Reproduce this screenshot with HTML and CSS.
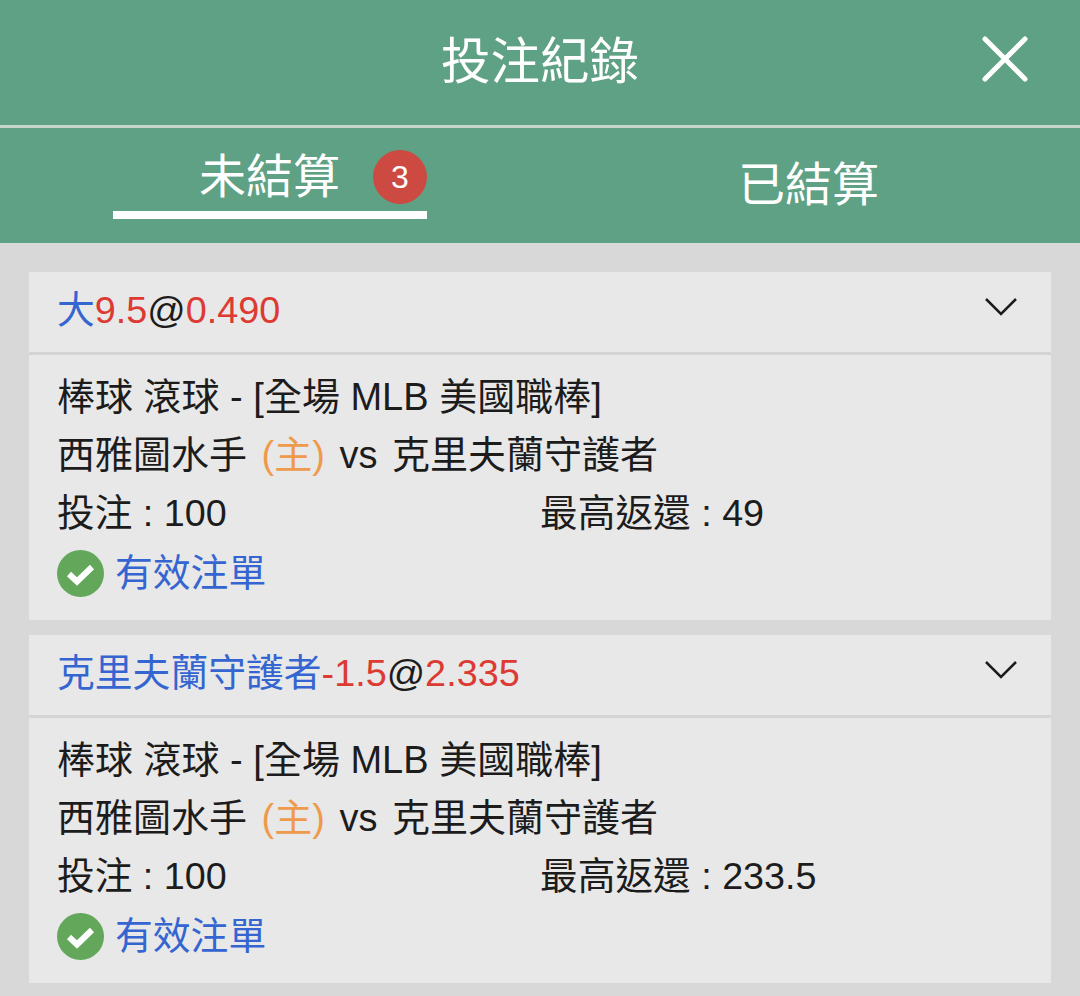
FILE: index.html
```html
<!DOCTYPE html>
<html lang="zh-Hant">
<head>
  <meta charset="UTF-8" />
  <meta name="viewport" content="width=device-width, initial-scale=1.0"/>
  <title>投注紀錄</title>
  <link rel="stylesheet" href="styles.css">
</head>
<body>
  <header class="top-bar">
    <h1>投注紀錄</h1>
    <svg class="close-icon" viewBox="0 0 46 46" width="46" height="46">
      <path d="M3 3 L43 43 M43 3 L3 43" />
    </svg>
  </header>

  <nav class="tabs">
    <div class="tab tab-active">
      <span>未結算</span>
      <span class="badge">3</span>
    </div>
    <div class="tab tab-done">已結算</div>
  </nav>

  <main class="list">
    <section class="card">
      <div class="card-head">
        <div class="pick"><span class="blue">大</span><span class="red">9.5</span>@<span class="red">0.490</span></div>
        <svg class="chevron" viewBox="0 0 32 18" width="32" height="18"><path d="M1 1 L16 16 L31 1" /></svg>
      </div>
      <div class="card-body">
        <div class="row">棒球 滾球 - [全場 MLB 美國職棒]</div>
        <div class="row row-teams">西雅圖水手 <span class="orange">(主)</span> vs 克里夫蘭守護者</div>
        <div class="row row-split">
          <span class="stake">投注 : 100</span>
          <span>最高返還 : 49</span>
        </div>
        <div class="row status">
          <svg class="check" viewBox="0 0 47 47" width="47" height="47">
            <circle cx="23.5" cy="23.5" r="23.5" />
            <path d="M12 24 L20 31.5 L35 17" />
          </svg>
          <span class="blue">有效注單</span>
        </div>
      </div>
    </section>

    <section class="card">
      <div class="card-head">
        <div class="pick"><span class="blue">克里夫蘭守護者</span><span class="red">-1.5</span>@<span class="red">2.335</span></div>
        <svg class="chevron" viewBox="0 0 32 18" width="32" height="18"><path d="M1 1 L16 16 L31 1" /></svg>
      </div>
      <div class="card-body">
        <div class="row">棒球 滾球 - [全場 MLB 美國職棒]</div>
        <div class="row row-teams">西雅圖水手 <span class="orange">(主)</span> vs 克里夫蘭守護者</div>
        <div class="row row-split">
          <span class="stake">投注 : 100</span>
          <span>最高返還 : 233.5</span>
        </div>
        <div class="row status">
          <svg class="check" viewBox="0 0 47 47" width="47" height="47">
            <circle cx="23.5" cy="23.5" r="23.5" />
            <path d="M12 24 L20 31.5 L35 17" />
          </svg>
          <span class="blue">有效注單</span>
        </div>
      </div>
    </section>
  </main>
</body>
</html>
```

FILE: styles.css
```css
:root {
  --green: #5ea184;
  --page-bg: #d8d8d8;
  --card-bg: #e8e8e8;
  --blue: #3565d0;
  --red: #dc3a33;
  --orange: #ee9a4d;
  --text: #1c1c1c;
}

html, body {
  margin: 0;
  height: 996px;
  overflow: hidden;
}

body {
  background: var(--page-bg);
  color: var(--text);
  font-family: "Liberation Sans", "Noto Sans CJK TC", sans-serif;
  font-size: 38px;
}

.top-bar {
  height: 125px;
  background: var(--green);
  border-bottom: 3px solid #c5d6cd;
  display: flex;
  align-items: center;
  justify-content: center;
  position: relative;
}

.top-bar h1 {
  margin: 0 0 2px;
  color: #fff;
  font-size: 49.5px;
  font-weight: 400;
  line-height: 1;
}

.close-icon {
  position: absolute;
  right: 52px;
  top: 36px;
}

.close-icon path {
  stroke: #fff;
  stroke-width: 5;
  stroke-linecap: round;
  fill: none;
}

.tabs {
  height: 115px;
  background: var(--green);
  color: #fff;
  font-size: 47px;
  line-height: 1;
  display: flex;
}

.tab {
  box-sizing: border-box;
  white-space: nowrap;
}

.tab-active {
  width: 314px;
  height: 91px;
  margin-left: 113px;
  padding: 25px 0 0 86px;
  border-bottom: 8px solid #fff;
  display: flex;
  gap: 33px;
}

.badge {
  flex: none;
  width: 54px;
  height: 54px;
  margin-top: -3px;
  border-radius: 50%;
  background: #cd4a43;
  font-size: 32px;
  line-height: 54px;
  text-align: center;
}

.tab-done {
  margin-left: 311px;
  padding-top: 33px;
}

.list {
  padding: 29px 29px 0;
  display: flex;
  flex-direction: column;
  gap: 15px;
}

.card {
  background: var(--card-bg);
}

.card-head {
  height: 80px;
  padding: 0 34px 0 28px;
  border-bottom: 3px solid #d4d4d4;
  display: flex;
  align-items: center;
  justify-content: space-between;
}

.pick {
  font-size: 37.8px;
  line-height: 1;
  margin-bottom: 2px;
}

.chevron {
  margin-bottom: 10px;
}

.chevron path {
  stroke: #1c1c1c;
  stroke-width: 2.5;
  fill: none;
}

.card-body {
  height: 265px;
  padding: 13px 28px 0;
  box-sizing: border-box;
}

.row {
  height: 58px;
  line-height: 58px;
  white-space: nowrap;
}

.row-teams {
  word-spacing: 4px;
}

.row-split {
  display: flex;
  font-size: 37.7px;
}

.stake {
  width: 483px;
}

.status {
  display: flex;
  align-items: center;
  gap: 11px;
  margin-top: 2px;
  font-size: 37.8px;
}

.check circle {
  fill: #63a75b;
}

.check path {
  stroke: #fff;
  stroke-width: 6;
  fill: none;
}

.blue {
  color: var(--blue);
}

.red {
  color: var(--red);
}

.orange {
  color: var(--orange);
}
```
